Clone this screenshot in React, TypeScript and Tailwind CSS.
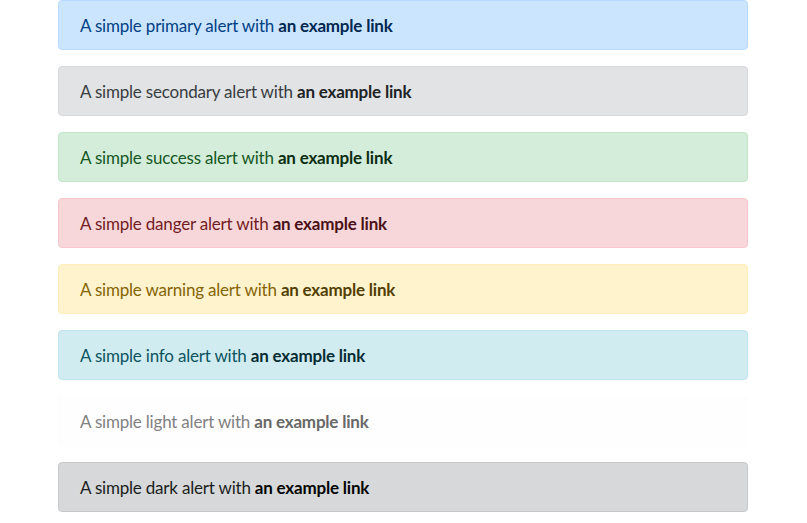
import React from "react";

const alerts = [
  { name: "primary", cls: "bg-[#cce5ff] border-[#b8daff] text-[#004085]", link: "text-[#002752]" },
  { name: "secondary", cls: "bg-[#e2e3e5] border-[#d6d8db] text-[#383d41]", link: "text-[#202326]" },
  { name: "success", cls: "bg-[#d4edda] border-[#c3e6cb] text-[#155724]", link: "text-[#0b2e13]" },
  { name: "danger", cls: "bg-[#f8d7da] border-[#f5c6cb] text-[#721c24]", link: "text-[#491217]" },
  { name: "warning", cls: "bg-[#fff3cd] border-[#ffeeba] text-[#856404]", link: "text-[#533f03]" },
  { name: "info", cls: "bg-[#d1ecf1] border-[#bee5eb] text-[#0c5460]", link: "text-[#062c33]" },
  { name: "light", cls: "bg-[#fefefe] border-[#fdfdfe] text-[#818182]", link: "text-[#686868]" },
  { name: "dark", cls: "bg-[#d6d8d9] border-[#c6c8ca] text-[#1b1e21]", link: "text-[#040505]" },
];

export default function App() {
  return (
    <div className="min-h-[523px] bg-white" style={{ fontFamily: 'Lato, "Noto Sans", sans-serif' }}>
      <div className="w-[690px] ml-[58px] flex flex-col gap-4">
        {alerts.map((a) => (
          <div
            key={a.name}
            className={`h-[50px] flex items-center border rounded pl-[21px] pt-[1px] text-[17px] tracking-[-0.2px] ${a.cls}`}
          >
            <span>
              A simple {a.name} alert with{" "}
              <a href="#" className={`font-bold ${a.link}`}>
                an example link
              </a>
            </span>
          </div>
        ))}
      </div>
    </div>
  );
}
